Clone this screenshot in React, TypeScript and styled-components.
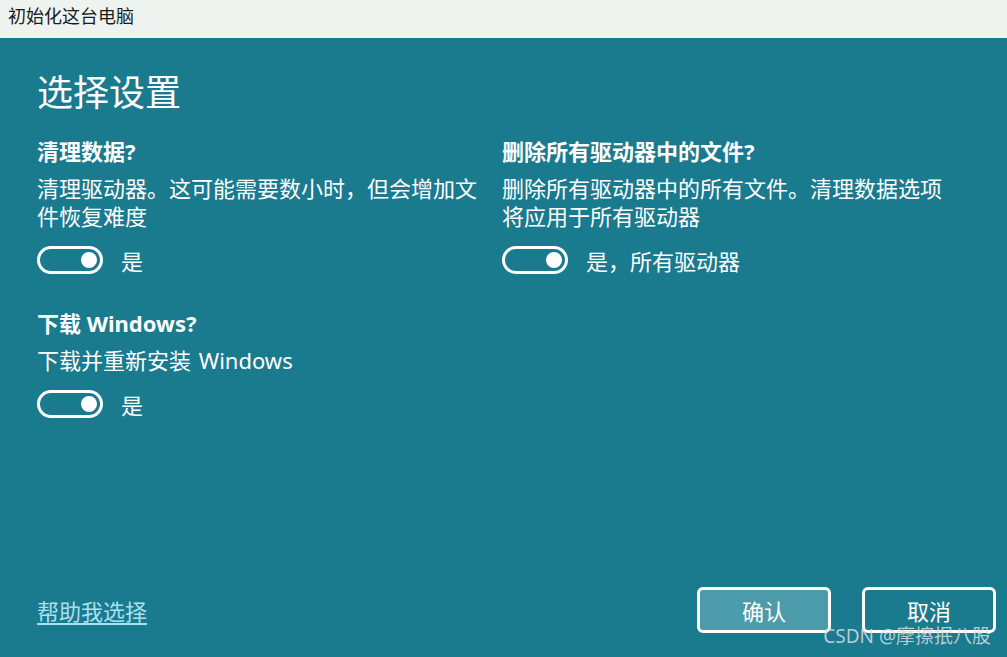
import React from 'react';
import styled, { createGlobalStyle } from 'styled-components';

const GlobalStyle = createGlobalStyle`
  html, body {
    margin: 0;
    padding: 0;
    height: 100%;
    overflow: hidden;
  }
  #root {
    height: 100%;
  }
  * {
    box-sizing: border-box;
  }
`;

const FONT = `"Noto Sans", "Noto Sans CJK SC", sans-serif`;

const Window = styled.div`
  height: 657px;
  width: 1007px;
  display: flex;
  flex-direction: column;
  font-family: ${FONT};
  position: relative;
  background-color: #1a7a8e;
`;

const TitleBar = styled.div`
  height: 38px;
  flex-shrink: 0;
  background-color: #eef3f0;
  color: #1b1b1b;
  font-size: 18px;
  line-height: 32px;
  padding-left: 8px;
`;

const Content = styled.div`
  flex: 1;
  display: flex;
  flex-direction: column;
  padding: 33px 11px 24px 37px;
  color: #ffffff;
`;

const Heading = styled.h1`
  margin: 0 0 22px;
  font-size: 36px;
  font-weight: 400;
  line-height: 44px;
`;

const OptionsGrid = styled.div`
  display: grid;
  grid-template-columns: 455px 455px;
  column-gap: 10px;
  row-gap: 34px;
  align-items: start;
`;

const Section = styled.div`
  display: flex;
  flex-direction: column;
`;

const SectionTitle = styled.div`
  font-size: 22px;
  font-weight: 700;
  line-height: 28px;
`;

const SectionText = styled.div`
  margin-top: 9px;
  font-size: 22px;
  line-height: 28px;
  word-spacing: 2px;
`;

const ToggleRow = styled.div`
  margin-top: 15px;
  display: flex;
  align-items: center;
  gap: 18px;
  height: 30px;
  font-size: 22px;
`;

const ToggleTrack = styled.div<{ $on: boolean }>`
  width: 66px;
  height: 28px;
  border: 3px solid #ffffff;
  border-radius: 14px;
  display: flex;
  align-items: center;
  justify-content: ${p => (p.$on ? 'flex-end' : 'flex-start')};
  padding: 0 3px;
`;

const ToggleKnob = styled.div`
  width: 16px;
  height: 16px;
  border-radius: 50%;
  background-color: #ffffff;
`;

const Footer = styled.div`
  margin-top: auto;
  display: flex;
  align-items: center;
  justify-content: space-between;
`;

const HelpLink = styled.a`
  font-size: 22px;
  color: #a9e1f0;
  text-decoration: underline;
  text-underline-offset: 3px;
  cursor: pointer;
`;

const Buttons = styled.div`
  display: flex;
  gap: 31px;
`;

const DialogButton = styled.button<{ $primary?: boolean }>`
  width: 134px;
  height: 46px;
  border: 3px solid #ffffff;
  border-radius: 6px;
  background-color: ${p => (p.$primary ? '#4c9bab' : 'transparent')};
  color: #ffffff;
  font-family: ${FONT};
  font-size: 22px;
  padding: 0;
  cursor: pointer;
`;

const Watermark = styled.div`
  position: absolute;
  right: 16px;
  bottom: 8px;
  font-size: 19px;
  color: rgba(215, 222, 226, 0.85);
  pointer-events: none;
`;

type Option = {
  title: string;
  text: string;
  label: string;
};

const options: Option[] = [
  {
    title: '清理数据?',
    text: '清理驱动器。这可能需要数小时，但会增加文件恢复难度',
    label: '是',
  },
  {
    title: '删除所有驱动器中的文件?',
    text: '删除所有驱动器中的所有文件。清理数据选项将应用于所有驱动器',
    label: '是，所有驱动器',
  },
  {
    title: '下载 Windows?',
    text: '下载并重新安装 Windows',
    label: '是',
  },
];

const Toggle: React.FC<{ on: boolean }> = ({ on }) => (
  <ToggleTrack $on={on}>
    <ToggleKnob />
  </ToggleTrack>
);

export default function App() {
  return (
    <>
      <GlobalStyle />
      <Window>
        <TitleBar>初始化这台电脑</TitleBar>
        <Content>
          <Heading>选择设置</Heading>
          <OptionsGrid>
            {options.map(opt => (
              <Section key={opt.title}>
                <SectionTitle>{opt.title}</SectionTitle>
                <SectionText>{opt.text}</SectionText>
                <ToggleRow>
                  <Toggle on />
                  <span>{opt.label}</span>
                </ToggleRow>
              </Section>
            ))}
          </OptionsGrid>
          <Footer>
            <HelpLink>帮助我选择</HelpLink>
            <Buttons>
              <DialogButton $primary>确认</DialogButton>
              <DialogButton>取消</DialogButton>
            </Buttons>
          </Footer>
        </Content>
        <Watermark>CSDN @摩擦抿八股</Watermark>
      </Window>
    </>
  );
}
